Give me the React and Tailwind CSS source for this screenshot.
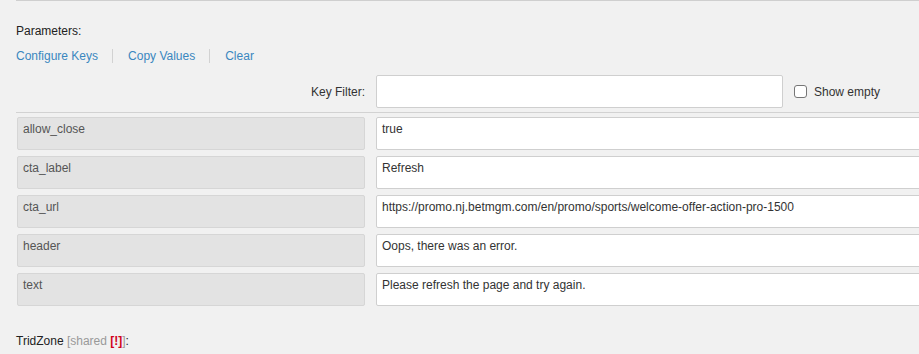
import React from "react";

const rows = [
  ["allow_close", "true"],
  ["cta_label", "Refresh"],
  ["cta_url", "https://promo.nj.betmgm.com/en/promo/sports/welcome-offer-action-pro-1500"],
  ["header", "Oops, there was an error."],
  ["text", "Please refresh the page and try again."],
];

export default function App() {
  return (
    <div
      className="w-[919px] h-[354px] overflow-hidden bg-[#f1f1f1] text-[12px] leading-[16px] text-[#222]"
      style={{ fontFamily: '"Liberation Sans", Arial, sans-serif' }}
    >
      <div className="ml-[16px] border-t border-[#cfcfcf] w-[920px]" />
      <div className="pl-[16px]">
        <div className="pt-[22px]">Parameters:</div>
        <div className="flex items-center mt-[9px] text-[#3a87bf]">
          <span>Configure Keys</span>
          <span className="ml-[14px] mr-[15px] w-px h-[14px] bg-[#d2d2d2]" />
          <span>Copy Values</span>
          <span className="ml-[14px] mr-[15px] w-px h-[14px] bg-[#d2d2d2]" />
          <span>Clear</span>
        </div>
        <div className="flex items-center mt-[11px]">
          <div className="w-[349px] shrink-0 text-right text-[#333]">Key Filter:</div>
          <div className="ml-[11px] w-[407px] shrink-0 h-[33px] bg-white border border-[#cfcfcf] rounded-[2px]" />
          <div className="ml-[11px] flex items-center shrink-0">
            <span className="w-[13px] h-[13px] border border-[#767676] rounded-[3px] bg-white" />
            <span className="ml-[7px] text-[#333]">Show empty</span>
          </div>
        </div>
        <div className="mt-[4px] border-b border-[#d2d2d2] w-[920px]" />
        <div className="pt-[4px] flex flex-col gap-[6px]">
          {rows.map(([k, v]) => (
            <div key={k} className="flex">
              <div className="w-[348px] shrink-0 ml-[1px] h-[33px] bg-[#e3e3e3] border border-[#d6d6d6] rounded-[2px] px-[5px] pt-[3px] text-[#555]">
                {k}
              </div>
              <div className="ml-[11px] w-[560px] shrink-0 h-[33px] bg-white border border-[#cfcfcf] rounded-[2px] px-[5px] pt-[3px] text-[#333] whitespace-nowrap">
                {v}
              </div>
            </div>
          ))}
        </div>
        <div className="mt-[27px]">
          TridZone <span className="text-[#999]">[shared </span>
          <span className="text-[#d0021b] font-bold">[!]</span>
          <span className="text-[#999]">]</span>:
        </div>
      </div>
    </div>
  );
}
